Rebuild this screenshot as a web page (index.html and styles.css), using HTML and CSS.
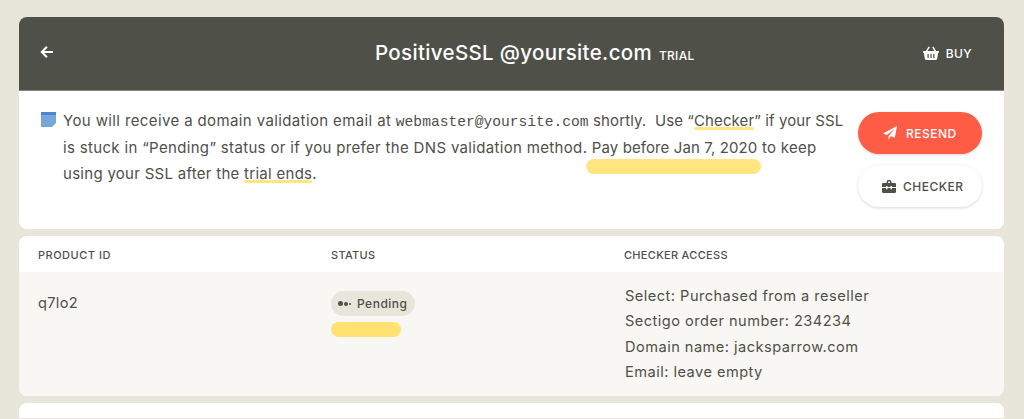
FILE: index.html
```html
<!DOCTYPE html>
<html lang="en">
<head>
<meta charset="utf-8">
<title>PositiveSSL</title>
<link rel="stylesheet" href="styles.css">
</head>
<body>
<main class="page">
  <section class="card main-card">
    <header class="top">
      <svg class="back" viewBox="0 0 14 14" width="14" height="14"><path d="M7 1.8 1.8 7 7 12.2M2 7h11" fill="none" stroke="#fff" stroke-width="2"/></svg>
      <h1 class="title">PositiveSSL @yoursite.com <small>TRIAL</small></h1>
      <a class="buy">
        <svg viewBox="0 0 16 14" width="16" height="14"><path fill="#fff" d="M5.6.6 2.9 5H.7C.3 5 0 5.300 0 5.700v.6c0 .4.3.7.7.7h.2l.9 5.800c.1.700.6 1.200 1.300 1.200h9.800c.7 0 1.200-.5 1.300-1.200l.9-5.800h.2c.4 0 .7-.3.700-.7v-.6c0-.4-.3-.7-.7-.7h-2.200L10.400.6 9.200 1.300 11.400 5H4.600l2.200-3.700z"/><path fill="#4f5048" d="M4.500 8h1.200v4H4.500zM7.400 8h1.200v4H7.400zM10.300 8h1.200v4h-1.200z"/></svg>
        BUY
      </a>
    </header>
    <div class="notice">
      <svg class="note" viewBox="0 0 15 15" width="15" height="15"><path fill="#77a6dc" d="M0 0h15v11l-4 4H0z"/><path fill="#4a86cf" d="M0 0h15v3H0z"/></svg>
      <p class="msg"><span class="lead">You will receive a domain validation email at</span> <code>webmaster@yoursite.com</code> <span class="tight">shortly.&nbsp; Use “<span class="uline">Checker</span>” if your SSL</span> is stuck in “Pending” status or if you prefer the DNS validation method. <span class="pay tight">Pay before Jan 7, 2020</span> <span class="tail">to keep using your SSL after the <span class="uline">trial ends</span>.</span></p>
      <div class="actions">
        <a class="btn btn-red">
          <svg viewBox="0 0 14 14" width="14" height="14"><path fill="#fff" d="M14 0 11.800 11.700 7.800 10 5.500 14V10.200L11.500 3 3.800 9 0 7.400z"/></svg>
          RESEND
        </a>
        <a class="btn btn-white">
          <svg viewBox="0 0 14 13" width="14" height="13"><path fill="#4f5048" d="M4.300 3 5 .8C5.100.3 5.500 0 6 0h2c.5 0 .9.300 1 .8L9.700 3h3.100c.7 0 1.200.5 1.200 1.200V7H10V6H8.500v1h-3V6H4v1H0V4.200C0 3.500.5 3 1.200 3zM5.800 3h2.400l-.4-1.500H6.200zM0 8h4v1.200h1.500V8h3v1.200H10V8h4v3.800c0 .7-.5 1.200-1.200 1.200H1.200C.5 13 0 12.500 0 11.800z"/></svg>
          CHECKER
        </a>
      </div>
    </div>
  </section>

  <section class="card table-card">
    <div class="row head">
      <div>PRODUCT ID</div>
      <div>STATUS</div>
      <div>CHECKER ACCESS</div>
    </div>
    <div class="row data">
      <div class="pid">q7lo2</div>
      <div class="status">
        <span class="badge"><i class="dots"><b></b><b></b><b></b></i>Pending</span>
        <span class="mark"></span>
      </div>
      <div class="access">
        <div>Select: Purchased from a reseller</div>
        <div>Sectigo order number: 234234</div>
        <div>Domain name: jacksparrow.com</div>
        <div>Email: leave empty</div>
      </div>
    </div>
  </section>

  <section class="card next-card"></section>
</main>
</body>
</html>
```
FILE: styles.css
```css
* { box-sizing: border-box; }
html, body { margin: 0; height: 100%; overflow: hidden; }
body {
  background: #e8e6da;
  color: #4f5048;
  font-family: Inter, "Open Sans", "Liberation Sans", sans-serif;
}
.page {
  padding: 17px 20px 0 19px;
  display: flex;
  flex-direction: column;
  gap: 7px;
}
.card { background: #fff; border-radius: 8px; overflow: hidden; }
.top {
  height: 74px;
  background: #4f5048;
  color: #fff;
  border-bottom: 1px solid #8a8a80;
  display: flex;
  align-items: center;
  padding: 0 32px 0 21px;
}
.back { margin-top: -3px; flex: none; }
.title {
  margin: -2px auto 0 321px;
  font-size: 20.5px;
  font-weight: 500;
  letter-spacing: .34px;
}
.title small { font-size: 12px; font-weight: 500; letter-spacing: .3px; margin-left: 1px; }
.buy {
  display: flex;
  align-items: center;
  gap: 7px;
  font-size: 12px;
  font-weight: 500;
  letter-spacing: .4px;
  margin-top: -1px;
}
.notice {
  height: 138px;
  display: flex;
  align-items: flex-start;
  padding: 20px 22px 0 22px;
}
.note { flex: none; margin-right: 7px; margin-top: 1px; }
.msg {
  margin: -3px 0 0;
  width: 785px;
  flex: none;
  font-size: 15px;
  line-height: 26px;
  letter-spacing: .33px;
}
.msg code {
  font-family: "Liberation Mono", monospace;
  font-size: 14.6px;
  letter-spacing: 0;
}
.lead { letter-spacing: .38px; }
.tight { letter-spacing: .1px; }
.tail { letter-spacing: .28px; }
.uline, .pay { position: relative; }
.uline::after {
  content: "";
  position: absolute;
  left: 0;
  right: 0;
  bottom: 0;
  height: 3px;
  border-radius: 2px;
  background: #ffe680;
}
.pay::after {
  content: "";
  position: absolute;
  left: -6px;
  right: -4px;
  top: 21px;
  height: 15px;
  border-radius: 8px;
  background: #ffe680;
}
.actions {
  margin-left: auto;
  margin-top: 1px;
  display: flex;
  flex-direction: column;
  gap: 11px;
  flex: none;
  width: 124px;
}
.btn {
  height: 42px;
  border-radius: 21px;
  display: flex;
  align-items: center;
  font-size: 12px;
  font-weight: 500;
  letter-spacing: .5px;
  box-shadow: 0 1px 3px rgba(0,0,0,.16);
}
.btn-red { background: #ff5c45; color: #fff; padding-left: 25px; gap: 9px; }
.btn-white { background: #fff; color: #4f5048; padding-left: 24px; gap: 7px; }
.table-card { height: 160px; }
.row {
  display: grid;
  grid-template-columns: 293px 293px 1fr;
  padding: 0 19px;
}
.head {
  height: 36px;
  align-items: center;
  font-size: 11px;
  font-weight: 500;
  letter-spacing: .3px;
  padding-top: 1px;
}
.head div:first-child { letter-spacing: .5px; }
.data {
  height: 124px;
  background: #f8f7f3;
  font-size: 14.6px;
  line-height: 25.300px;
  letter-spacing: .47px;
  padding-top: 12px;
}
.pid { letter-spacing: .3px; padding-top: 7px; }
.access { padding-left: 1px; }
.status {
  display: flex;
  flex-direction: column;
  align-items: flex-start;
  gap: 6px;
  padding-top: 7px;
}
.badge {
  height: 25px;
  width: 84px;
  border-radius: 13px;
  background: #e8e6da;
  display: flex;
  align-items: center;
  gap: 6px;
  padding-left: 7px;
  font-size: 12px;
  font-weight: 500;
  letter-spacing: .5px;
}
.dots { display: flex; align-items: center; gap: 1px; font-style: normal; }
.dots b { display: block; border-radius: 50%; background: #4f5048; }
.dots b:nth-child(1) { width: 5px; height: 5px; }
.dots b:nth-child(2) { width: 4px; height: 4px; }
.dots b:nth-child(3) { width: 2px; height: 2px; }
.mark {
  width: 70px;
  height: 15px;
  border-radius: 8px;
  background: #ffe272;
}
.next-card { height: 15px; border-radius: 8px 8px 0 0; }
```
